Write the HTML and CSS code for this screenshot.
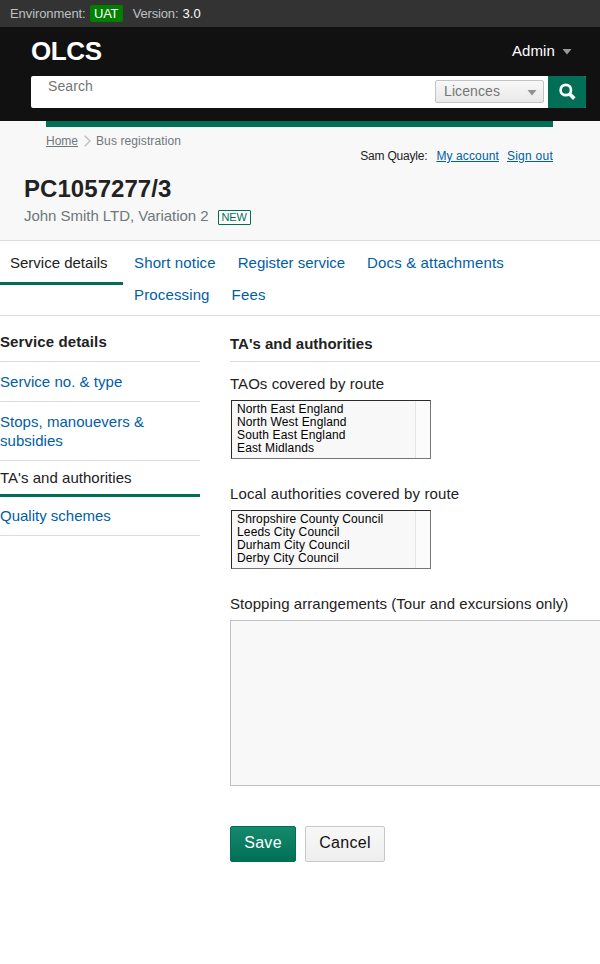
FILE: index.html
```html
<!DOCTYPE html>
<html lang="en">
<head>
<meta charset="utf-8">
<title>OLCS - Bus registration</title>
<link rel="stylesheet" href="styles.css">
</head>
<body>
<div class="env">
  <span class="env-name">Environment:</span><span class="env-tag">UAT</span><span class="env-version">Version:</span><span class="env-value">3.0</span>
</div>
<header class="header">
  <div class="header-top">
    <span class="logo">OLCS</span>
    <span class="admin">Admin<svg class="caret" width="10" height="6" viewBox="0 0 10 6"><path d="M0.5 0h9L5 5.5z" fill="#999"/></svg></span>
  </div>
  <form class="search">
    <span class="search-text">Search</span>
    <span class="search-select">Licences<svg width="10" height="6" viewBox="0 0 10 6"><path d="M0.5 0h9L5 5.5z" fill="#929292"/></svg></span>
    <button class="search-button" type="button" aria-label="Search"><svg width="18" height="18" viewBox="0 0 18 18" fill="none" stroke="#fff"><circle cx="7.8" cy="7" r="5.2" stroke-width="2.7"/><path d="M11.4 10.8L16.3 15.6" stroke-width="3.7"/></svg></button>
  </form>
</header>
<section class="banner">
  <div class="bar"></div>
  <div class="meta">
    <nav class="crumbs"><a>Home</a><svg width="7" height="12" viewBox="0 0 7 12" fill="none" stroke="#bfc1c3" stroke-width="1.5"><path d="M0.7 0.7L6 6L0.7 11.3"/></svg><span>Bus registration</span></nav>
    <div class="account"><span>Sam Quayle:</span><a>My account</a><a>Sign out</a></div>
  </div>
  <h1>PC1057277/3</h1>
  <p class="sub"><span>John Smith LTD, Variation 2</span><span class="status">NEW</span></p>
</section>
<nav class="tabs">
  <a class="current">Service details</a>
  <div class="tab-links"><a>Short notice</a><a class="register">Register service</a><a>Docs &amp; attachments</a><a>Processing</a><a>Fees</a></div>
</nav>
<div class="content">
  <aside class="side">
    <h2>Service details</h2>
    <a>Service no. &amp; type</a>
    <a>Stops, manouevers &amp; subsidies</a>
    <a class="selected">TA's and authorities</a>
    <a class="last">Quality schemes</a>
  </aside>
  <main class="main">
    <h2>TA's and authorities</h2>
    <div class="label">TAOs covered by route</div>
    <div class="list"><div class="options"><div>North East England</div><div>North West England</div><div>South East England</div><div>East Midlands</div></div></div>
    <div class="label local">Local authorities covered by route</div>
    <div class="list"><div class="options"><div>Shropshire County Council</div><div>Leeds City Council</div><div>Durham City Council</div><div>Derby City Council</div></div></div>
    <div class="label">Stopping arrangements (Tour and excursions only)</div>
    <div class="textarea"></div>
    <div class="actions"><button class="save" type="button">Save</button><button class="cancel" type="button">Cancel</button></div>
  </main>
</div>
</body>
</html>
```
FILE: styles.css
```css
* { box-sizing: border-box; }
body {
  margin: 0;
  height: 964px;
  overflow: hidden;
  background: #fff;
  color: #222;
  font: 15px/19px "Liberation Sans", Arial, sans-serif;
}
h1, h2, p { margin: 0; }
button { font-family: inherit; }
svg { display: block; flex: none; }

.env {
  display: flex;
  align-items: center;
  height: 27px;
  padding-left: 10px;
  background: #333;
  color: #bfc1c3;
  font-size: 13px;
}
.env-name { letter-spacing: -0.08px; }
.env-tag {
  width: 33px;
  height: 17px;
  margin: 0 10px 0 4px;
  border-radius: 2px;
  background: #008000;
  color: #fff;
  line-height: 17px;
  text-align: center;
  letter-spacing: -0.3px;
}
.env-version { letter-spacing: -0.15px; }
.env-value { margin-left: 4px; color: #fff; letter-spacing: 0.1px; }

.header { height: 94px; padding: 0 14px 0 31px; background: #111; }
.header-top { display: flex; justify-content: space-between; height: 49px; }
.logo {
  color: #fff;
  font-size: 26px;
  font-weight: bold;
  line-height: 48px;
  letter-spacing: -0.4px;
}
.admin {
  display: flex;
  align-items: center;
  gap: 7px;
  height: 47px;
  padding-right: 14px;
  color: #fff;
  letter-spacing: 0.1px;
}
.caret { margin-top: 3px; }
.search {
  display: flex;
  height: 32px;
  border-radius: 2px;
  background: #fff;
  overflow: hidden;
}
.search-text {
  flex: 1;
  padding: 1px 0 0 17px;
  color: #757575;
  font-size: 14px;
  letter-spacing: 0.1px;
}
.search-select {
  display: flex;
  align-items: center;
  justify-content: space-between;
  width: 109px;
  height: 23px;
  margin: 4px 4px 0 0;
  padding: 0 6px 0 8px;
  border: 1px solid #c4c4c4;
  border-radius: 2px;
  background: linear-gradient(#f8f8f8, #e9e9e9);
  color: #757575;
  font-size: 14px;
  letter-spacing: 0.1px;
}
.search-select svg { margin-top: 3px; }
.search-button {
  width: 38px;
  padding: 0 0 0 10px;
  border: 0;
  background: #006f56;
}

.banner {
  height: 120px;
  border-bottom: 1px solid #dcdcdc;
  background: #f8f8f8;
}
.bar { height: 6px; margin: 0 47px 0 46px; background: #006f56; }
.meta {
  display: flex;
  justify-content: space-between;
  height: 47px;
  padding: 0 47px 0 46px;
  font-size: 12px;
}
.crumbs { display: flex; padding-top: 5px; color: #6f777b; }
.crumbs a { text-decoration: underline; }
.crumbs svg { margin: 3px 5px 0 6px; }
.crumbs span { letter-spacing: 0.1px; }
.account { display: flex; padding-top: 20px; }
.account span { margin-right: 9px; letter-spacing: -0.2px; }
.account a { color: #005ea5; text-decoration: underline; letter-spacing: 0.12px; }
.account a + a { margin-left: 8px; letter-spacing: 0.25px; }
h1 { padding-left: 24px; font-size: 24px; line-height: 30px; letter-spacing: 0.05px; }
.sub {
  display: flex;
  padding: 2px 0 0 24px;
  color: #6f777b;
  letter-spacing: -0.03px;
}
.status {
  width: 33px;
  height: 15px;
  margin: 4px 0 0 9px;
  border: 1px solid #006f56;
  border-radius: 1px;
  background: #fff;
  color: #006f56;
  font-size: 11px;
  line-height: 13px;
  text-align: center;
  letter-spacing: -0.2px;
}

.tabs {
  display: flex;
  height: 75px;
  border-bottom: 1px solid #dcdcdc;
  color: #005ea5;
}
.tabs .current {
  width: 123px;
  height: 44px;
  padding: 12px 0 0 10px;
  border-bottom: 3px solid #006f56;
  color: #222;
}
.tab-links {
  display: flex;
  flex-wrap: wrap;
  align-content: flex-start;
  width: 400px;
  gap: 13px 22px;
  padding: 12px 0 0 11px;
  letter-spacing: 0.14px;
}
.tab-links .register { letter-spacing: -0.01px; }

.content { display: flex; gap: 30px; }
.side { flex: none; width: 200px; color: #005ea5; }
.side h2, .main h2 {
  height: 46px;
  border-bottom: 1px solid #dcdcdc;
  color: #222;
  font-size: 15px;
  line-height: 19px;
}
.side h2 { padding-top: 16px; letter-spacing: 0.12px; }
.side a { display: block; padding: 10px 0; border-bottom: 1px solid #dcdcdc; letter-spacing: 0.03px; }
.side .selected {
  padding: 7px 0;
  border-bottom: 3px solid #006f56;
  color: #222;
}
.side .last { padding: 9px 0 10px; letter-spacing: 0; }
.main { flex: none; width: 400px; }
.main h2 { padding-top: 18px; }
.label { padding: 12px 0 1px; letter-spacing: 0.05px; }
.label.local { letter-spacing: 0.12px; }
.list {
  width: 200px;
  height: 59px;
  margin: 6px 0 13px 1px;
  border: 1px solid;
  border-color: #2b2b2b #767676 #767676 #2b2b2b;
  background: #fbfbfb;
}
.options {
  width: 184px;
  height: 57px;
  padding: 2px 0 0 5px;
  border-right: 1px solid #e5e5e5;
  background: #f8f8f8;
  color: #000;
  font-size: 12px;
  line-height: 13px;
  letter-spacing: 0.14px;
}
.textarea {
  width: 380px;
  height: 166px;
  margin-top: 6px;
  border: 1px solid #bfc1c3;
  background: #f8f8f8;
}
.actions { display: flex; gap: 9px; padding-top: 40px; }
.actions button {
  height: 36px;
  padding: 0 0 2px;
  border-radius: 2px;
  font-size: 16px;
  letter-spacing: 0.3px;
}
.save {
  width: 66px;
  border: 1px solid #006f56;
  background: linear-gradient(#168a6c, #006f56);
  color: #fff;
}
.cancel {
  width: 80px;
  border: 1px solid #c8c8c8;
  background: linear-gradient(#f8f8f8, #eee);
  color: #111;
}
```
